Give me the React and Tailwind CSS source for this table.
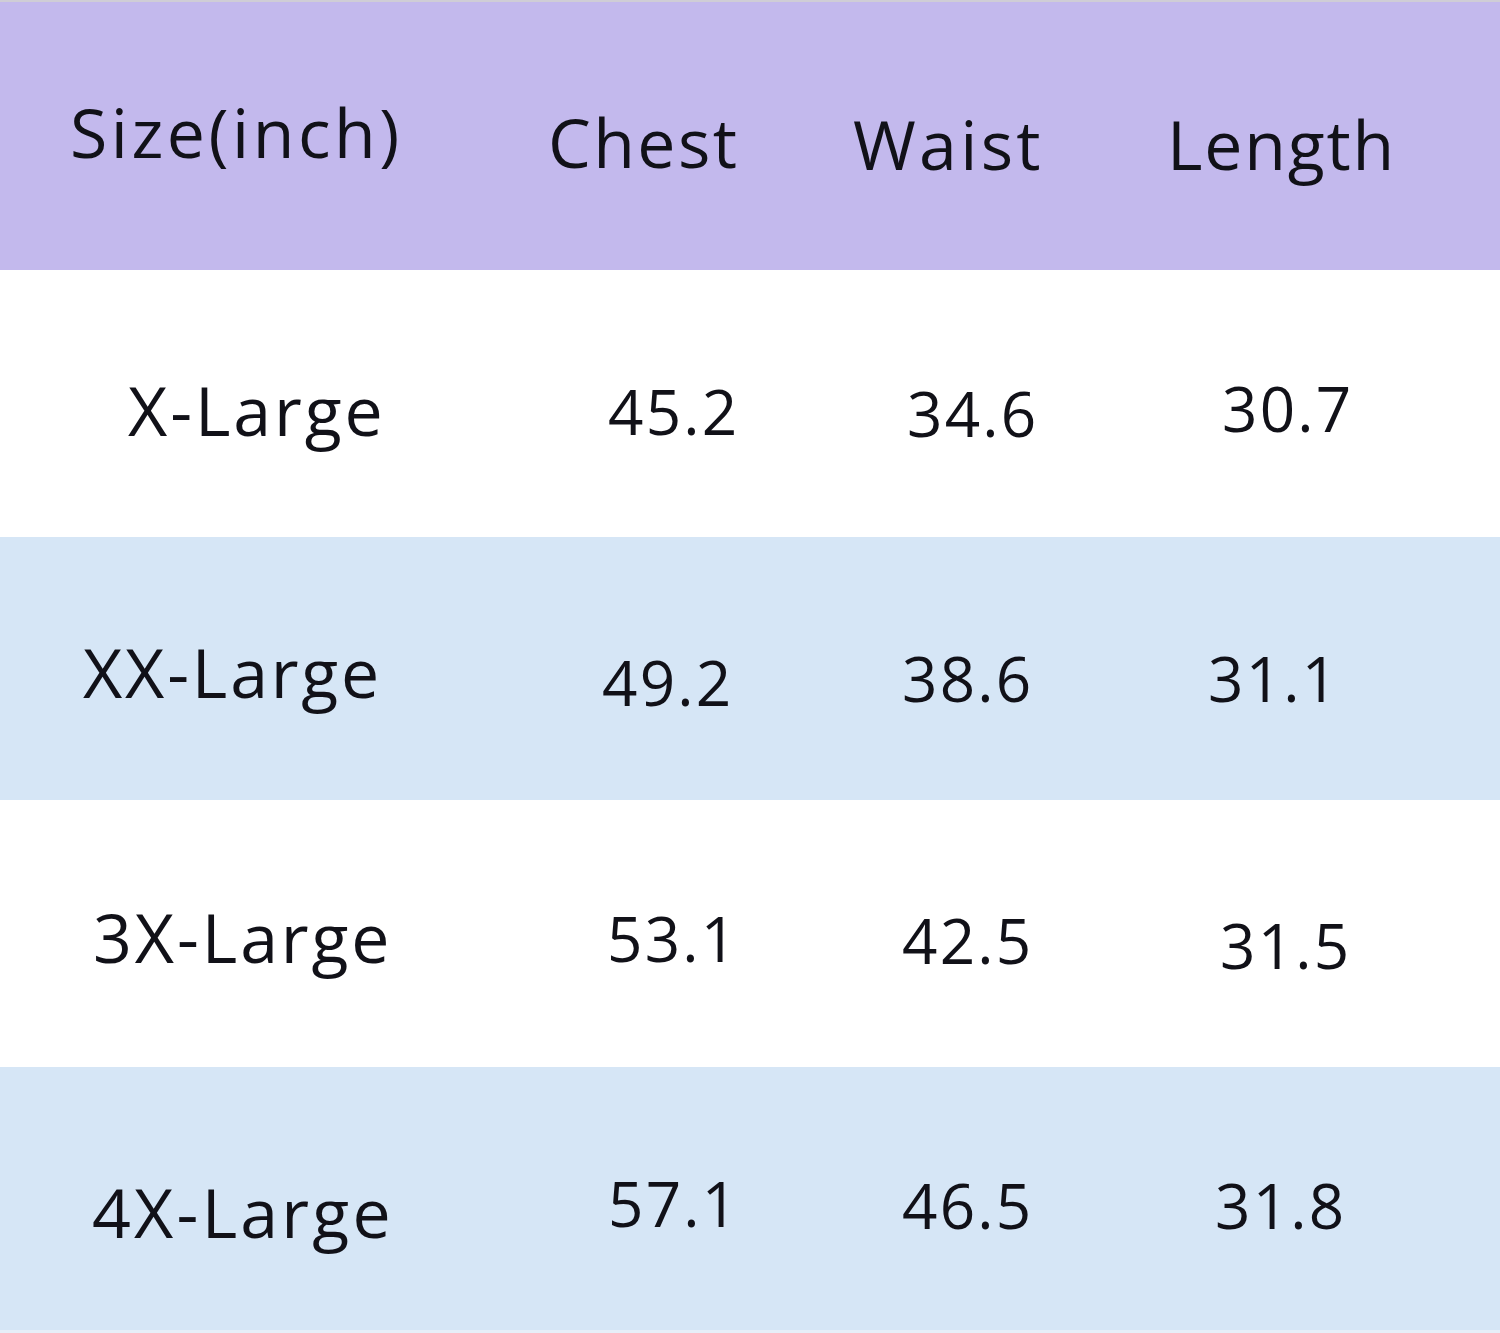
import React from "react";

const cols = ["w-[540px]", "w-[300px]", "w-[310px]", "w-[350px]"];

const rows = [
  {
    bg: "bg-[#c3b9ed] h-[270px] border-t-2 border-[#cfcdd6]",
    cells: [
      { t: "Size(inch)", c: "pl-[70px] pt-[96px] text-[68px] tracking-[3.5px]" },
      { t: "Chest", c: "pl-[8px] pt-[106px] text-[68px] tracking-[2.4px]" },
      { t: "Waist", c: "pl-[13px] pt-[108px] text-[68px] tracking-[3.3px]" },
      { t: "Length", c: "pl-[17px] pt-[108px] text-[68px] tracking-[1.8px]" },
    ],
  },
  {
    bg: "bg-white h-[267px]",
    cells: [
      { t: "X-Large", c: "pl-[128px] pt-[106px] text-[68px] tracking-[2.9px]" },
      { t: "45.2", c: "pl-[68px] pt-[110px] text-[62px] tracking-[2.2px]" },
      { t: "34.6", c: "pl-[67px] pt-[112px] text-[62px] tracking-[2.2px]" },
      { t: "30.7", c: "pl-[72px] pt-[107px] text-[62px] tracking-[2.2px]" },
    ],
  },
  {
    bg: "bg-[#d6e6f6] h-[263px]",
    cells: [
      { t: "XX-Large", c: "pl-[83px] pt-[101px] text-[68px] tracking-[2.8px]" },
      { t: "49.2", c: "pl-[62px] pt-[114px] text-[62px] tracking-[2.2px]" },
      { t: "38.6", c: "pl-[62px] pt-[110px] text-[62px] tracking-[2.2px]" },
      { t: "31.1", c: "pl-[58px] pt-[110px] text-[62px] tracking-[2.2px]" },
    ],
  },
  {
    bg: "bg-white h-[267px]",
    cells: [
      { t: "3X-Large", c: "pl-[93px] pt-[103px] text-[68px] tracking-[2.9px]" },
      { t: "53.1", c: "pl-[67px] pt-[107px] text-[62px] tracking-[2.2px]" },
      { t: "42.5", c: "pl-[62px] pt-[109px] text-[62px] tracking-[2.2px]" },
      { t: "31.5", c: "pl-[70px] pt-[114px] text-[62px] tracking-[2.2px]" },
    ],
  },
  {
    bg: "bg-[#d6e6f6] h-[263px]",
    cells: [
      { t: "4X-Large", c: "pl-[92px] pt-[111px] text-[68px] tracking-[3.2px]" },
      { t: "57.1", c: "pl-[68px] pt-[105px] text-[62px] tracking-[2.2px]" },
      { t: "46.5", c: "pl-[62px] pt-[107px] text-[62px] tracking-[2.2px]" },
      { t: "31.8", c: "pl-[65px] pt-[107px] text-[62px] tracking-[2.2px]" },
    ],
  },
];

export default function App() {
  return (
    <div
      className="w-[1500px] h-[1333px] bg-[#e6eef8] overflow-hidden text-[#111118] font-[370]"
      style={{ fontFamily: '"Open Sans", "Noto Sans", sans-serif' }}
    >
      {rows.map((r, i) => (
        <div key={i} className={`flex w-full box-border ${r.bg}`}>
          {r.cells.map((cell, j) => (
            <div key={j} className={`${cols[j]} leading-none whitespace-nowrap ${cell.c}`}>
              {cell.t}
            </div>
          ))}
        </div>
      ))}
    </div>
  );
}
